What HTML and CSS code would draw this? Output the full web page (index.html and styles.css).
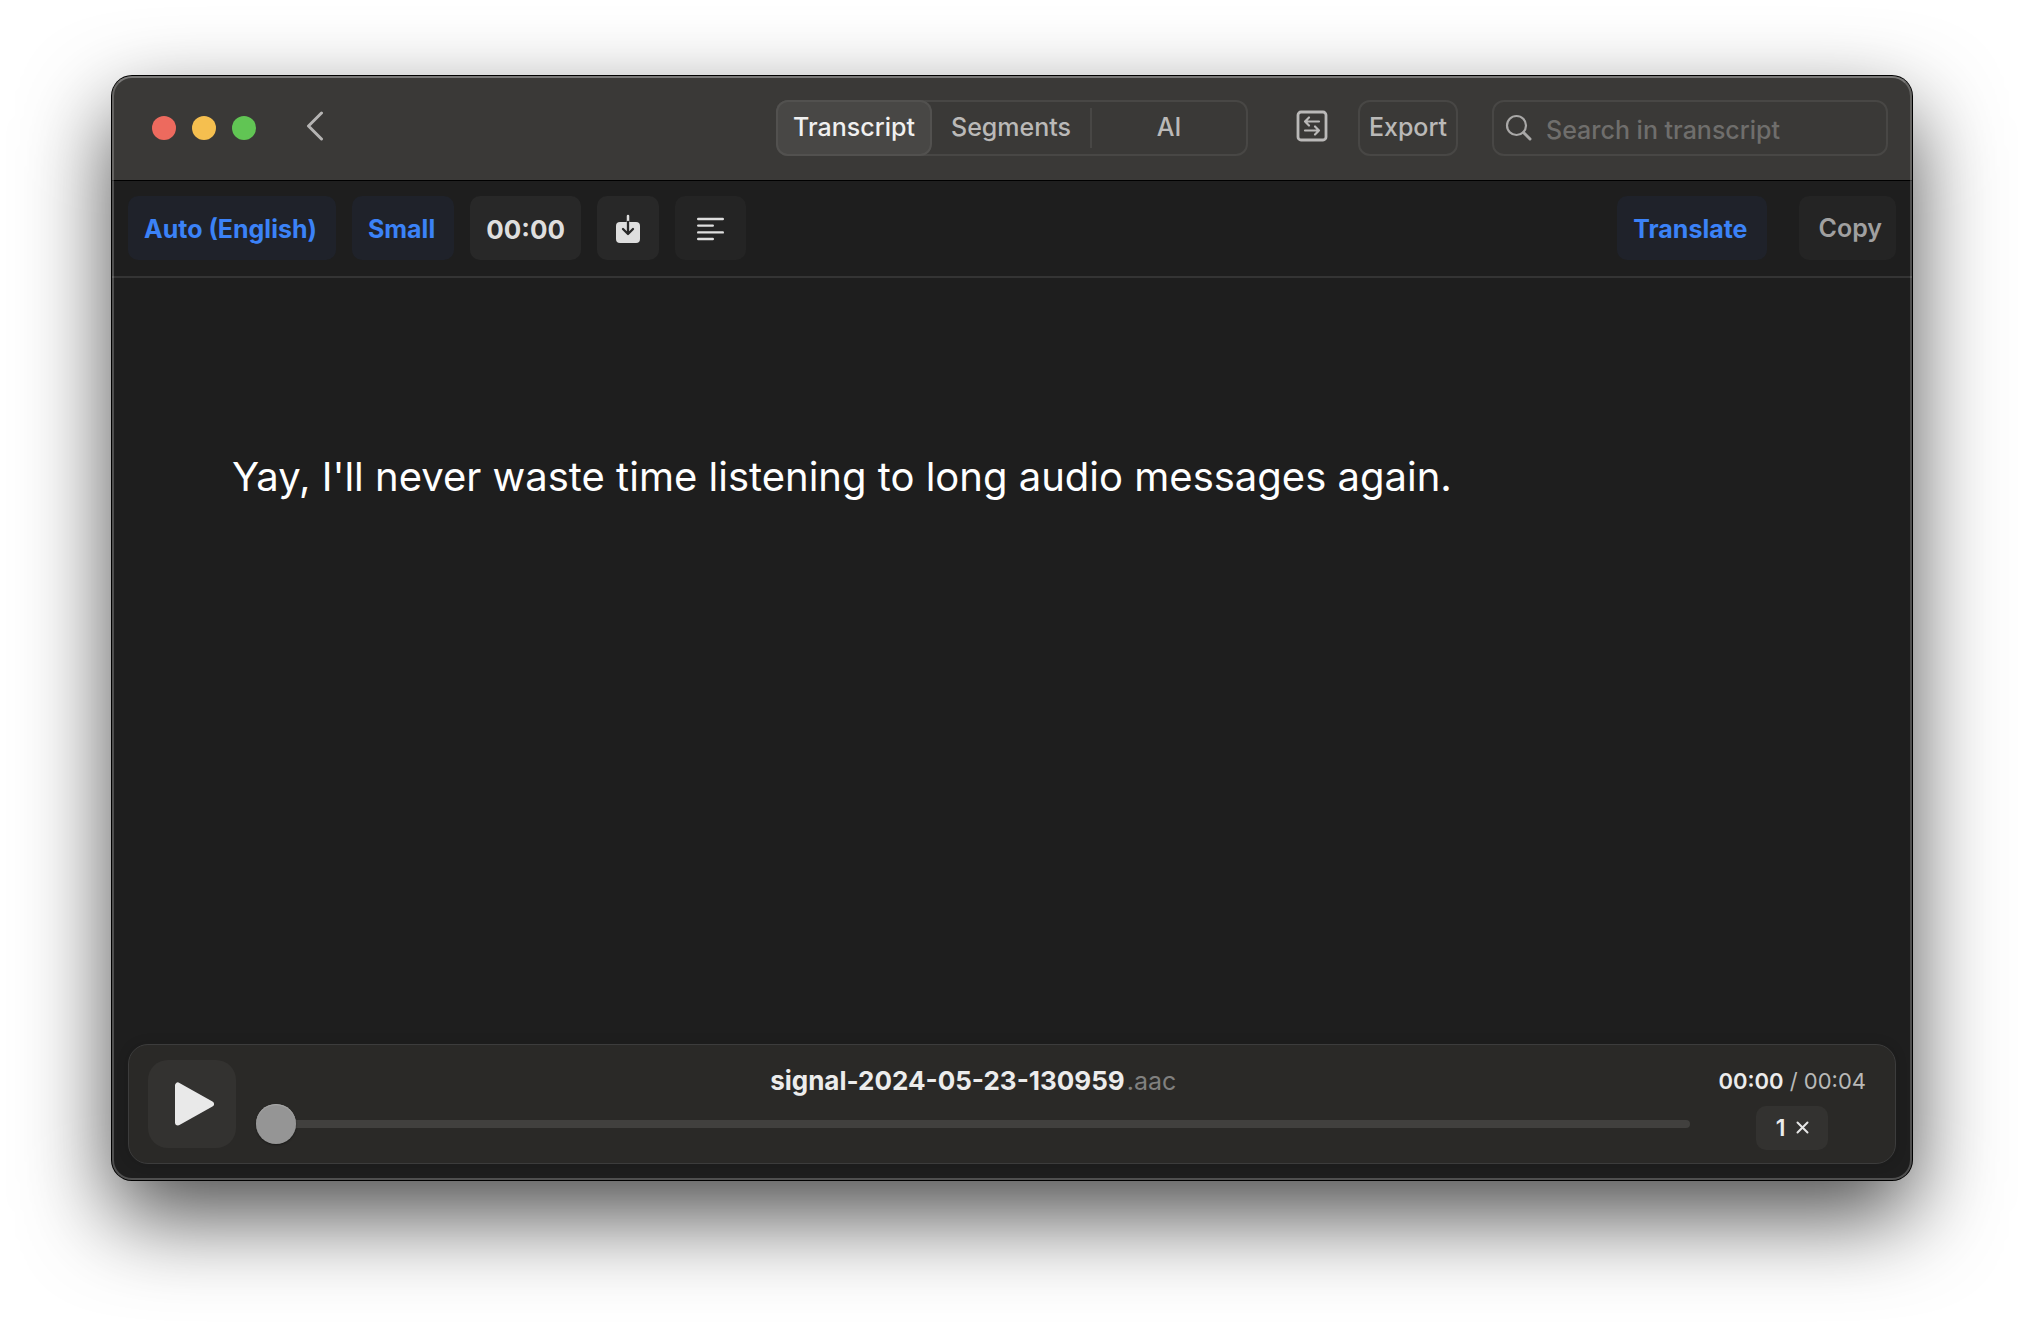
FILE: index.html
```html
<!DOCTYPE html>
<html lang="en">
<head>
    <meta charset="UTF-8">
    <meta name="viewport" content="width=device-width, initial-scale=1.0">
    <title>Transcript</title>
    <link rel="stylesheet" href="styles.css">
</head>
<body>

    <div class="window">
        <!-- Title bar -->
        <header class="titlebar">
            <div class="lights">
                <button class="light red" aria-label="Close"></button>
                <button class="light yellow" aria-label="Minimize"></button>
                <button class="light green" aria-label="Zoom"></button>
            </div>
            <button class="back" aria-label="Back">
                <svg width="18" height="30" viewBox="0 0 18 30" fill="none" stroke="#b5b4b3" stroke-width="3" stroke-linecap="round" stroke-linejoin="round">
                    <path d="M15.500 2 2.500 15 15.500 28"/>
                </svg>
            </button>

            <div class="tabs">
                <button class="tab active">Transcript</button>
                <button class="tab">Segments</button>
                <button class="tab last">AI</button>
            </div>

            <button class="swap" aria-label="Swap">
                <svg width="32" height="32" viewBox="0 0 32 32" fill="none" stroke="#bab9b8" stroke-width="2.200" stroke-linecap="round" stroke-linejoin="round">
                    <rect x="2" y="2" width="28" height="28" rx="3" stroke-width="2.800"/>
                    <path d="M23 11.500H9M13 7.500l-4 4 4 4"/>
                    <path d="M9 20.500h14M19 16.500l4 4-4 4"/>
                </svg>
            </button>
            <button class="export">Export</button>

            <label class="search">
                <svg width="28" height="28" viewBox="0 0 28 28" fill="none" stroke="#a9a8a7" stroke-linecap="round">
                    <circle cx="11.500" cy="11.500" r="9.500" stroke-width="2.200"/>
                    <path d="M18.500 18.500 25 25" stroke-width="3"/>
                </svg>
                <input type="text" placeholder="Search in transcript" aria-label="Search in transcript">
            </label>
        </header>

        <!-- Transcript options -->
        <nav class="toolbar">
            <button class="chip blue">Auto (English)</button>
            <button class="chip blue">Small</button>
            <button class="chip clock">00:00</button>
            <button class="chip" aria-label="Save">
                <svg width="30" height="32" viewBox="0 0 30 32" fill="none" stroke-linecap="round" stroke-linejoin="round">
                    <rect x="3" y="9" width="24" height="21" rx="4" fill="#dedede"/>
                    <path d="M15 3v6" stroke="#dedede" stroke-width="2.500"/>
                    <path d="M15 9v11.500M10 16l5 5 5-5" stroke="#282828" stroke-width="2.300"/>
                </svg>
            </button>
            <button class="chip dim wide" aria-label="Paragraphs">
                <svg width="27" height="24" viewBox="0 0 27 24" stroke="#dedede" stroke-width="2.400" stroke-linecap="round">
                    <path d="M1.200 2h24.600M1.200 8.600h14.600M1.200 15.400h24.600M1.200 22h14.600"/>
                </svg>
            </button>
            <button class="chip blue translate">Translate</button>
            <button class="chip dim copy">Copy</button>
        </nav>

        <main class="content">
            <p>Yay, I'll never waste time listening to long audio messages again.</p>
        </main>

        <!-- Audio player -->
        <footer class="player">
            <button class="play" aria-label="Play">
                <svg width="40" height="44" viewBox="0 0 40 44" fill="#e9e9e9" stroke="#e9e9e9" stroke-width="6" stroke-linejoin="round">
                    <path d="M4 3.500v37L37 22z"/>
                </svg>
            </button>
            <div class="track">
                <div class="file">signal-2024-05-23-130959<span>.aac</span></div>
                <input type="range" min="0" max="4" value="0" aria-label="Position">
            </div>
            <div class="status">
                <div class="time"><b>00:00</b> / 00:04</div>
                <button class="speed">1
                    <svg width="13" height="13" viewBox="0 0 13 13" stroke="#e6e6e6" stroke-width="2" stroke-linecap="round">
                        <path d="M1.500 1.500l10 10M11.500 1.500l-10 10"/>
                    </svg>
                </button>
            </div>
        </footer>
    </div>

</body>
</html>
```

FILE: styles.css
```css
* {
    box-sizing: border-box;
}

body {
    margin: 0;
    min-height: 100vh;
    padding: 76px 112px 148px;
    display: flex;
    background: white;
    font-family: Inter, "Liberation Sans", sans-serif;
    font-size: 25px;
}

button, input {
    font: inherit;
    border: none;
    padding: 0;
    margin: 0;
    background: none;
}

button {
    display: flex;
    align-items: center;
    justify-content: center;
}

.window {
    position: relative;
    flex: 1;
    min-width: 0;
    display: flex;
    flex-direction: column;
    background: #1e1e1e;
    border-radius: 20px;
    box-shadow: 0 0 0 1px #000, 0 36px 88px rgba(0,0,0,0.7);
}

/* light rim along the inside edge of the window */
.window::after {
    content: "";
    position: absolute;
    inset: 0;
    border: 2px solid rgba(255,255,255,0.22);
    border-top-color: rgba(255,255,255,0.32);
    border-radius: 20px;
    pointer-events: none;
}

/* Title bar */
.titlebar {
    display: flex;
    align-items: center;
    height: 105px;
    padding: 0 24px 0 40px;
    background: #3a3937;
    border-bottom: 1px solid #000;
    border-radius: 20px 20px 0 0;
    color: #bab9b8;
    font-weight: 500;
}

.lights {
    display: flex;
    gap: 16px;
}
.light {
    width: 24px;
    height: 24px;
    border-radius: 50%;
}
.red {
    background: #ed6a5e;
}
.yellow {
    background: #f5bf4f;
}
.green {
    background: #61c554;
}

.back {
    margin-left: 50px;
    padding-bottom: 4px;
}

.tabs {
    display: flex;
    height: 56px;
    margin-left: auto;
    border-radius: 12px;
    box-shadow: inset 0 0 0 2px #484745;
}
.tab {
    position: relative;
    width: 158px;
    padding-bottom: 2px;
    color: #bab9b8;
}
.tab.active {
    width: 156px;
    border-radius: 12px;
    background: #484745;
    box-shadow: inset 0 0 0 2px rgba(255,255,255,0.06);
    color: #f0f0f0;
}
.tab.last::before {
    content: "";
    position: absolute;
    left: 0;
    top: 8px;
    bottom: 8px;
    width: 2px;
    background: #484745;
}

.swap {
    margin-left: 48px;
    padding-bottom: 4px;
}

.export {
    width: 100px;
    height: 56px;
    margin-left: 30px;
    padding-bottom: 2px;
    border: 2px solid #484745;
    border-radius: 12px;
    color: #bab9b8;
}

.search {
    display: flex;
    align-items: center;
    gap: 13px;
    width: 396px;
    height: 56px;
    margin-left: 34px;
    padding: 0 11px;
    border: 2px solid #484745;
    border-radius: 12px;
}
.search input {
    flex: 1;
    min-width: 0;
    padding-top: 4px;
    outline: none;
    color: #e6e6e6;
}
.search input::placeholder {
    color: #6f6e6c;
}

/* Toolbar */
.toolbar {
    display: flex;
    align-items: flex-start;
    gap: 16px;
    height: 97px;
    padding: 15px 16px 0;
    border-bottom: 2px solid #343434;
}
.chip {
    height: 64px;
    padding: 2px 16px 0;
    border-radius: 10px;
    background: #282828;
    color: #dedede;
    font-weight: 700;
}
.chip.blue {
    padding-right: 19px;
    background: #1f222a;
    color: #3b82f7;
}
.chip.dim {
    background: #242424;
}
.chip.clock {
    font-size: 26px;
}
.chip.wide {
    padding: 2px 22px 0;
}
.chip.translate {
    margin-left: auto;
}
.chip.copy {
    margin-left: 16px;
    padding: 0 14px 0 20px;
    color: #a0a0a0;
    font-weight: 600;
}

/* Transcript text */
.content {
    flex: 1;
    padding: 169px 120px 60px;
    color: white;
    font-size: 40px;
    line-height: 60px;
}
.content p {
    margin: 0;
}

/* Player */
.player {
    display: flex;
    align-items: center;
    height: 120px;
    margin: 0 16px 16px;
    padding: 0 29px 0 19px;
    border: 1px solid #3c3c3c;
    border-radius: 20px;
    background: #2a2927;
    box-shadow: 0 0 12px rgba(0,0,0,0.15);
}
.play {
    width: 88px;
    height: 88px;
    padding-left: 4px;
    border-radius: 20px;
    background: #333230;
}
.track {
    flex: 1;
    display: flex;
    flex-direction: column;
    gap: 9px;
    margin: 0 28px 0 20px;
    padding-top: 3px;
}
.file {
    line-height: 28px;
    text-align: center;
    color: #ececec;
    font-size: 26px;
    font-weight: 700;
}
.file span {
    margin-left: 2px;
    color: #80807f;
    font-size: 25px;
    font-weight: 400;
}

.track input {
    -webkit-appearance: none;
    appearance: none;
    width: 100%;
    height: 40px;
}
.track input::-webkit-slider-runnable-track {
    height: 8px;
    border-radius: 4px;
    background: #41403e;
}
.track input::-webkit-slider-thumb {
    -webkit-appearance: none;
    width: 40px;
    height: 40px;
    margin-top: -16px;
    border-radius: 50%;
    background: #959595;
    box-shadow: inset 0 1px 1px #a8a8a8, 0 1px 2px rgba(0,0,0,0.4);
}

.status {
    display: flex;
    flex-direction: column;
    align-items: center;
    gap: 11px;
    padding-top: 8px;
}
.time {
    color: #b9b9b8;
    font-size: 22px;
    line-height: 28px;
}
.time b {
    color: #ececec;
    font-weight: 600;
}
.speed {
    gap: 10px;
    width: 72px;
    height: 44px;
    border-radius: 10px;
    background: #333230;
    color: #ececec;
    font-size: 23px;
    font-weight: 600;
}
```
